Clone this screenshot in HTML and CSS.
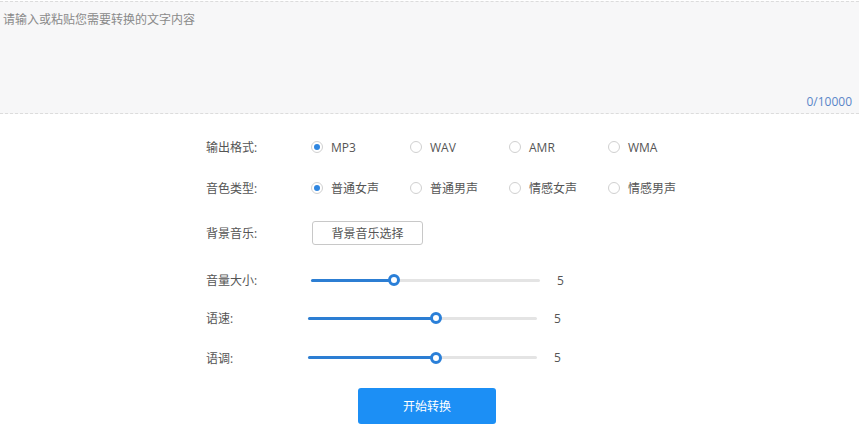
FILE: index.html
```html
<!DOCTYPE html>
<html lang="zh-CN">
<head>
<meta charset="utf-8">
<title>文字转语音</title>
<link rel="stylesheet" href="styles.css">
</head>
<body>
<div class="editor">
  <div class="placeholder">请输入或粘贴您需要转换的文字内容</div>
  <div class="counter">0/10000</div>
</div>
<div class="form">
  <div class="row row-a">
    <div class="label">输出格式:</div>
    <div class="options">
      <div class="opt"><span class="radio checked"></span><span>MP3</span></div>
      <div class="opt"><span class="radio"></span><span>WAV</span></div>
      <div class="opt"><span class="radio"></span><span>AMR</span></div>
      <div class="opt"><span class="radio"></span><span>WMA</span></div>
    </div>
  </div>
  <div class="row row-a">
    <div class="label">音色类型:</div>
    <div class="options">
      <div class="opt"><span class="radio checked"></span><span>普通女声</span></div>
      <div class="opt"><span class="radio"></span><span>普通男声</span></div>
      <div class="opt"><span class="radio"></span><span>情感女声</span></div>
      <div class="opt"><span class="radio"></span><span>情感男声</span></div>
    </div>
  </div>
  <div class="row row-b">
    <div class="label">背景音乐:</div>
    <button class="btn-plain">背景音乐选择</button>
  </div>
  <div class="row row-c">
    <div class="label">音量大小:</div>
    <div class="slider">
      <div class="track"><div class="fill" style="width:83px"><span class="thumb"></span></div></div>
    </div>
    <div class="value">5</div>
  </div>
  <div class="row row-d">
    <div class="label label-short">语速:</div>
    <div class="slider">
      <div class="track"><div class="fill" style="width:128px"><span class="thumb"></span></div></div>
    </div>
    <div class="value">5</div>
  </div>
  <div class="row row-e">
    <div class="label label-short">语调:</div>
    <div class="slider">
      <div class="track"><div class="fill" style="width:128px"><span class="thumb"></span></div></div>
    </div>
    <div class="value">5</div>
  </div>
  <button class="btn-primary">开始转换</button>
</div>
</body>
</html>
```
FILE: styles.css
```css
* { box-sizing: border-box; }
html, body { margin: 0; padding: 0; background: #fff; }
body {
  font-family: "Open Sans", "Noto Sans CJK SC", sans-serif;
  font-size: 12px;
  color: #555;
  width: 859px;
  height: 435px;
  overflow: hidden;
}
.editor {
  margin-top: 1px;
  height: 113px;
  background: #f7f7f8;
  border-top: 1px dashed #dcdcdc;
  border-bottom: 1px dashed #dcdcdc;
  display: flex;
  flex-direction: column;
  justify-content: space-between;
  padding: 9px 7px 2px 3px;
}
.placeholder { color: #8a8a8a; line-height: 18px; }
.counter { align-self: flex-end; color: #5a86c8; line-height: 18px; }
.form { padding-left: 206px; padding-top: 13px; }
.row { display: flex; align-items: center; }
.row-a { height: 40.5px; }
.row-b { height: 50px; }
.row-c { height: 44px; }
.row-d { height: 32.5px; }
.row-e { height: 46px; }
.label { width: 105px; flex: none; color: #555; }
.label-short { width: 102px; }
.options { display: flex; }
.opt { width: 99px; display: flex; align-items: center; gap: 8px; color: #555; }
.radio {
  width: 12px; height: 12px; border-radius: 50%;
  border: 1px solid #d0d0d0; background: #fff;
  display: flex; align-items: center; justify-content: center;
  flex: none;
}
.radio.checked::after {
  content: ""; width: 6px; height: 6px; border-radius: 50%; background: #2f86e0;
}
.btn-plain {
  margin-left: 1px;
  width: 111px; height: 24px;
  border: 1px solid #c8c8c8; border-radius: 3px;
  background: #fff; color: #555;
  font-family: inherit; font-size: 12px; padding: 0;
}
.slider { width: 229px; }
.track { height: 3px; background: #e4e4e4; border-radius: 2px; position: relative; }
.fill { height: 3px; background: #2c7ed3; border-radius: 2px; position: relative; }
.thumb {
  position: absolute; right: -6px; top: -4.5px;
  width: 12px; height: 12px; border-radius: 50%;
  background: #fff; border: 3px solid #2a7fd8;
}
.value { margin-left: 17px; color: #555; }
.btn-primary {
  display: block;
  margin: 7px 0 0 152px;
  width: 138px; height: 36px;
  border: none; border-radius: 3px;
  background: #1c8ff5; color: #fff;
  font-family: inherit; font-size: 12px;
}
```
